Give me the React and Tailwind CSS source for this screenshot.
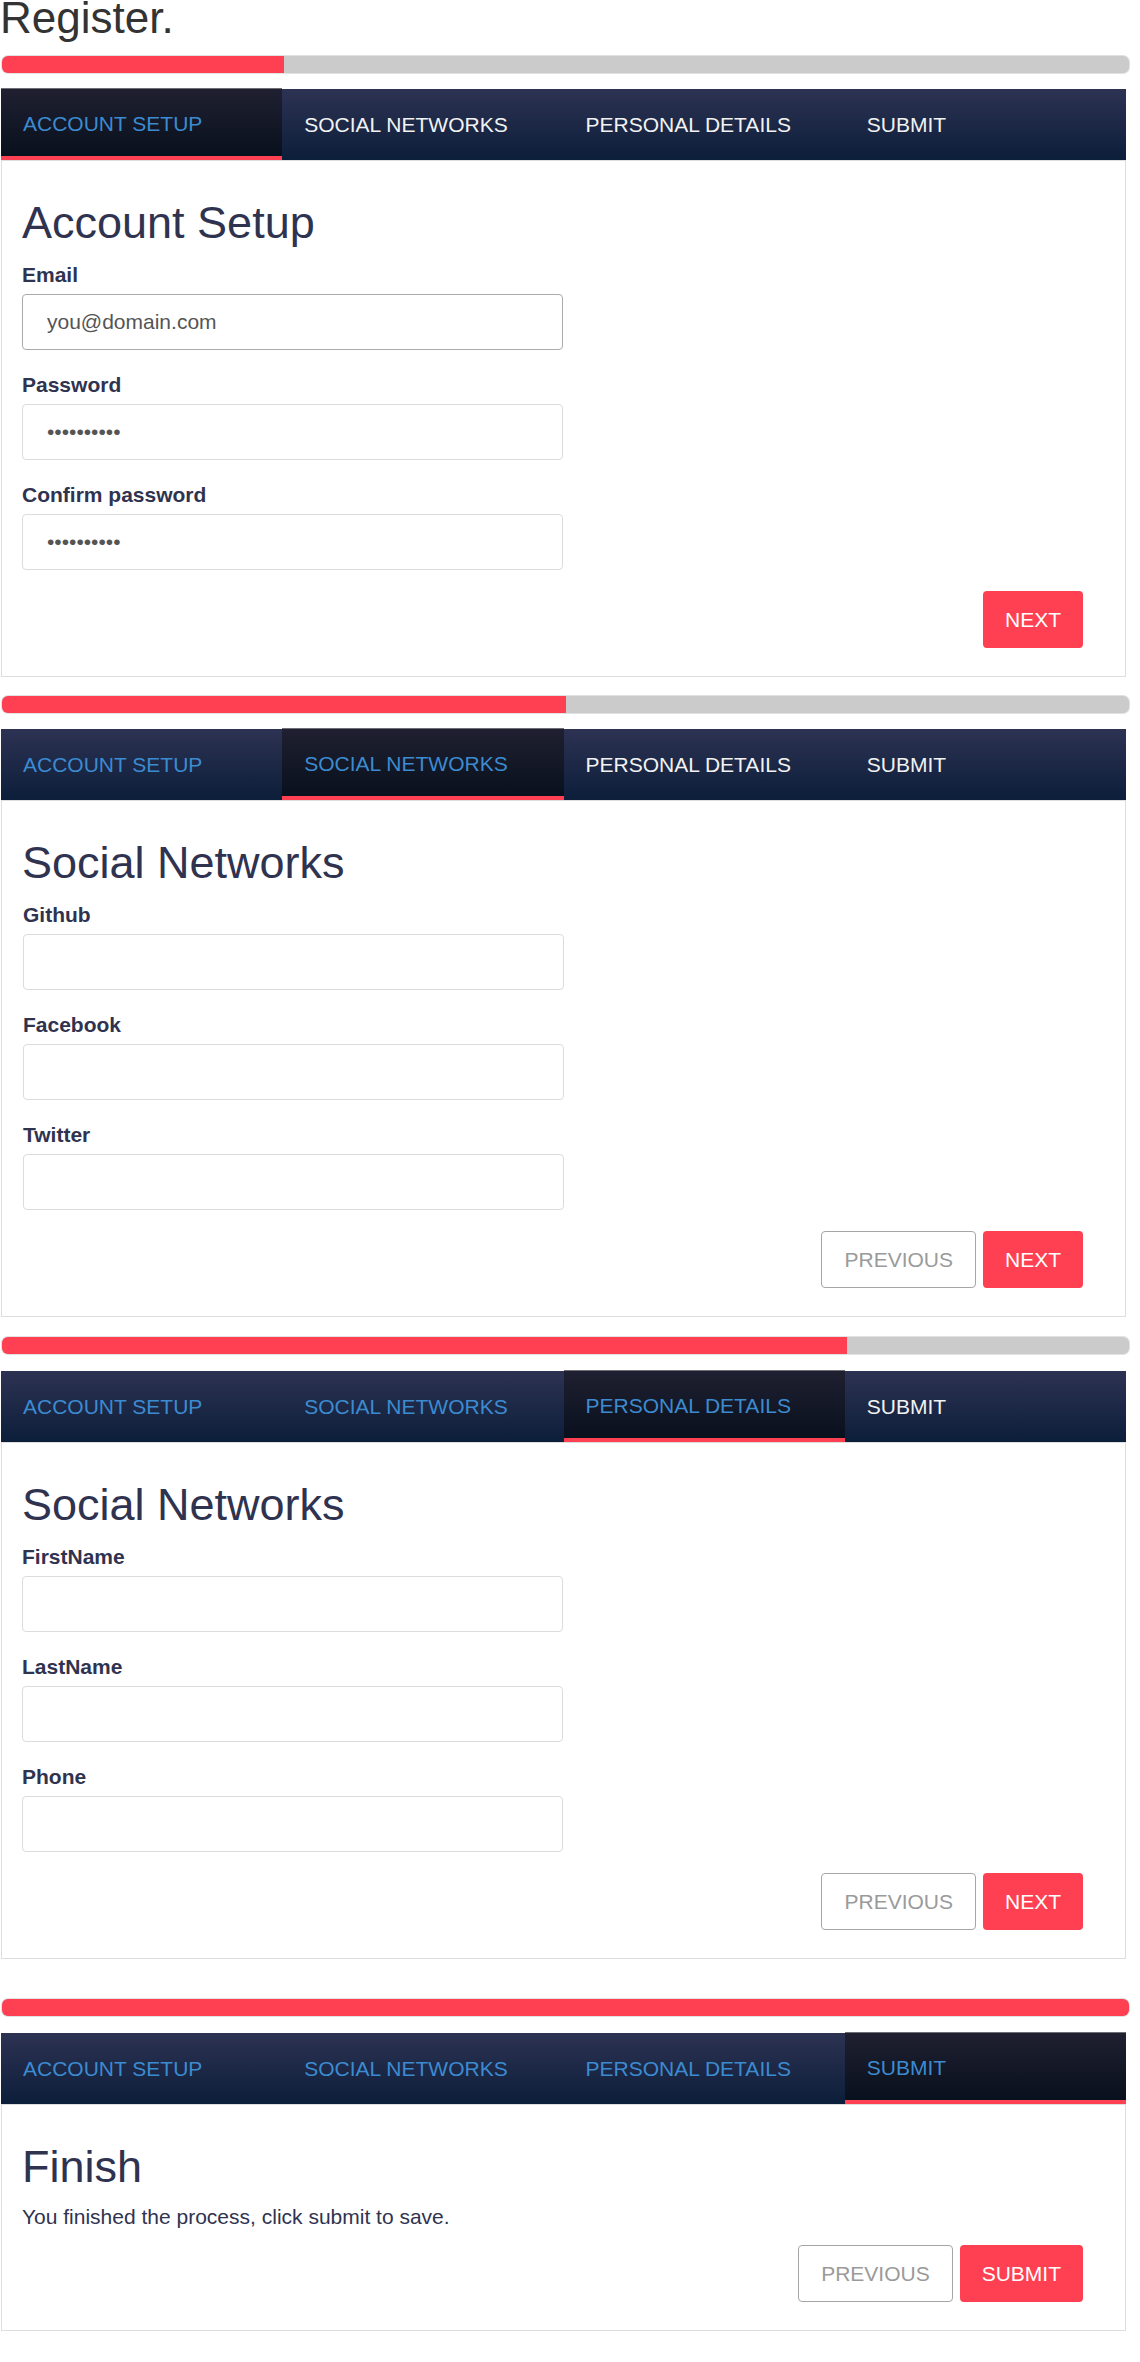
import { useState } from "react";

const STEPS = ["ACCOUNT SETUP", "SOCIAL NETWORKS", "PERSONAL DETAILS", "SUBMIT"];

// Progress bar on top of every step
const ProgressBar = ({ step }) => (
  <div className="ml-[2px] w-[1127px] h-[17px] rounded-[6px] bg-[#cbcbcb] shadow-[0_0_0_1px_#e2e2e2] overflow-hidden">
    <div className="h-full bg-[#ff4052]" style={{ width: `${(step + 1) * 25}%` }} />
  </div>
);

// Dark tab strip, done steps blue, current step darker with red underline
const Tabs = ({ step }) => (
  <div className="ml-[1px] w-[1125px] h-[72px] pt-[1px]">
    <div className="flex h-[71px] bg-linear-to-b from-[#2d3253] to-[#0b1e3a]">
      {STEPS.map((label, i) =>
        i === step ? (
          <div
            key={label}
            className="-mt-px flex w-1/4 h-[72px] items-center pl-[22px] pt-[2px] border-t border-[#6e6e72] border-b-[4px] border-b-[#ff4052] bg-linear-to-b from-[#1f2031] to-[#09101d] text-[#3c8bd0]"
          >
            {label}
          </div>
        ) : (
          <div
            key={label}
            className={`flex w-1/4 items-center pl-[22px] ${i < step ? "text-[#3c8bd0]" : "text-[#f2f2f2]"}`}
          >
            {label}
          </div>
        )
      )}
    </div>
  </div>
);

const Field = ({ label, type = "text", value, focused }) => (
  <div className="mb-[20px] last:mb-0">
    <label className="block h-[30px] leading-[30px] font-bold mb-[4px]">{label}</label>
    <input
      type={type}
      defaultValue={value}
      readOnly
      className={`block w-[541px] h-[56px] rounded-[4px] border px-[24px] text-[#555] outline-none ${
        focused ? "border-[#a9abad]" : "border-[#dcdcdc]"
      }`}
    />
  </div>
);

const Btn = ({ children, primary }) => (
  <button
    className={`h-[57px] px-[22px] rounded-[4px] ${
      primary ? "bg-[#ff4052] text-white" : "border border-[#a4a6a8] bg-white text-[#9a9a9a]"
    }`}
  >
    {children}
  </button>
);

const Panel = ({ step, title, className, children, buttons, gap }) => (
  <div className={className}>
    <ProgressBar step={step} />
    <div className={gap}>
      <Tabs step={step} />
    </div>
    <div className="ml-[1px] w-[1125px] border border-[#dedede] pt-[37px] pl-[20px] pb-[28px]">
      <h2 className="h-[50px] text-[45px] leading-[50px]">{title}</h2>
      {children}
      <div className="flex justify-end gap-[7px] pr-[42px]">{buttons}</div>
    </div>
  </div>
);

export default function App() {
  const [email] = useState("you@domain.com");

  return (
    <div className="w-[1140px] bg-white text-[21px] text-[#30334f] font-['Liberation_Sans',Arial,sans-serif]">
      <div className="h-[56px]">
        <h1 className="text-[44px] leading-[35px] text-[#333]">Register.</h1>
      </div>

      <Panel
        step={0}
        title="Account Setup"
        gap="mt-[15px]"
        buttons={<Btn primary>NEXT</Btn>}
      >
        <div className="mt-[12px] mb-[21px]">
          <Field label="Email" value={email} focused />
          <Field label="Password" type="password" value="1234567890" />
          <Field label="Confirm password" type="password" value="1234567890" />
        </div>
      </Panel>

      <Panel
        step={1}
        title="Social Networks"
        className="mt-[19px]"
        gap="mt-[15px]"
        buttons={
          <>
            <Btn>PREVIOUS</Btn>
            <Btn primary>NEXT</Btn>
          </>
        }
      >
        <div className="mt-[12px] mb-[21px] ml-[1px]">
          <Field label="Github" />
          <Field label="Facebook" />
          <Field label="Twitter" />
        </div>
      </Panel>

      <Panel
        step={2}
        title="Social Networks"
        className="mt-[20px]"
        gap="mt-[16px]"
        buttons={
          <>
            <Btn>PREVIOUS</Btn>
            <Btn primary>NEXT</Btn>
          </>
        }
      >
        <div className="mt-[12px] mb-[21px]">
          <Field label="FirstName" />
          <Field label="LastName" />
          <Field label="Phone" />
        </div>
      </Panel>

      <Panel
        step={3}
        title="Finish"
        className="mt-[40px]"
        gap="mt-[16px]"
        buttons={
          <>
            <Btn>PREVIOUS</Btn>
            <Btn primary>SUBMIT</Btn>
          </>
        }
      >
        <p className="mt-[10px] mb-[13px] leading-[30px]">You finished the process, click submit to save.</p>
      </Panel>

      <div className="mt-[31px] h-[2px] bg-[#ececec]" />
    </div>
  );
}
